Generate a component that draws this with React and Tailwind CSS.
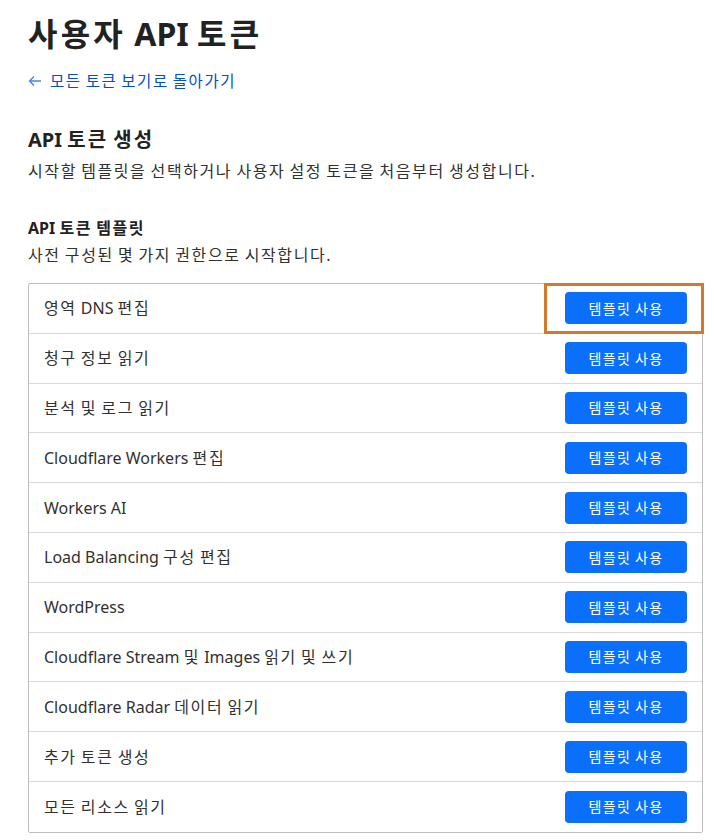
import React from 'react';

const templates = [
  '영역 DNS 편집',
  '청구 정보 읽기',
  '분석 및 로그 읽기',
  'Cloudflare Workers 편집',
  'Workers AI',
  'Load Balancing 구성 편집',
  'WordPress',
  'Cloudflare Stream 및 Images 읽기 및 쓰기',
  'Cloudflare Radar 데이터 읽기',
  '추가 토큰 생성',
  '모든 리소스 읽기',
];

// 한글 글자폭을 원본에 맞춰 조금 넓힌다
const Ko = ({ children }) =>
  children.split(/([가-힣]+)/).map((part, i) =>
    /[가-힣]/.test(part) ? (
      <span key={i} className="tracking-[0.1em]">{part}</span>
    ) : (
      part
    )
  );

const App = () => {
  return (
    <div
      className="min-h-screen bg-white text-[#313131] px-7 pt-[14px]"
      style={{ fontFamily: '"Noto Sans", "Noto Sans CJK KR", sans-serif' }}
    >
      <h1 className="text-[32px] font-bold leading-[40px] text-[#222]">
        <Ko>사용자 API 토큰</Ko>
      </h1>

      <a href="#" className="mt-[17px] flex items-center gap-[8px] text-[15.5px] leading-5 text-[#0051c3]">
        <svg width="14" height="14" viewBox="0 0 14 14" fill="none" stroke="#4a86d9" strokeWidth="1.4">
          <path d="M13 7H1.5M6 2.5L1.5 7L6 11.5" />
        </svg>
        <span>
          <Ko>모든 토큰 보기로 돌아가기</Ko>
        </span>
      </a>

      {/* 생성 */}
      <h2 className="mt-[37px] text-[20px] font-bold leading-6 text-[#222]">
        <Ko>API 토큰 생성</Ko>
      </h2>
      <p className="mt-[9px] text-[16px] leading-5">
        <Ko>시작할 템플릿을 선택하거나 사용자 설정 토큰을 처음부터 생성합니다.</Ko>
      </p>

      <h3 className="mt-[37px] text-[16px] font-bold leading-5 text-[#222]">
        <Ko>API 토큰 템플릿</Ko>
      </h3>
      <p className="mt-[7px] text-[16px] leading-5">
        <Ko>사전 구성된 몇 가지 권한으로 시작합니다.</Ko>
      </p>

      {/* 템플릿 목록 */}
      <div className="mt-[18px] w-[675px] border border-[#bdbdbd] rounded-[2px]">
        {templates.map((name, i) => (
          <div
            key={name}
            className={`relative flex items-center justify-between h-[49.8px] pl-[15px] pr-[15px] ${
              i < templates.length - 1 ? 'border-b border-[#d9d9d9]' : ''
            }`}
          >
            <span className="text-[16px]">
              <Ko>{name}</Ko>
            </span>
            <button className="w-[122px] h-8 rounded-[4px] bg-[#0a6ffa] text-white text-[14px]">
              <Ko>템플릿 사용</Ko>
            </button>
            {i === 0 && (
              <div className="absolute right-[-2px] top-[-1px] w-[160px] h-[51px] border-[3px] border-[#d4782c] pointer-events-none" />
            )}
          </div>
        ))}
      </div>
    </div>
  );
};

export default App;
